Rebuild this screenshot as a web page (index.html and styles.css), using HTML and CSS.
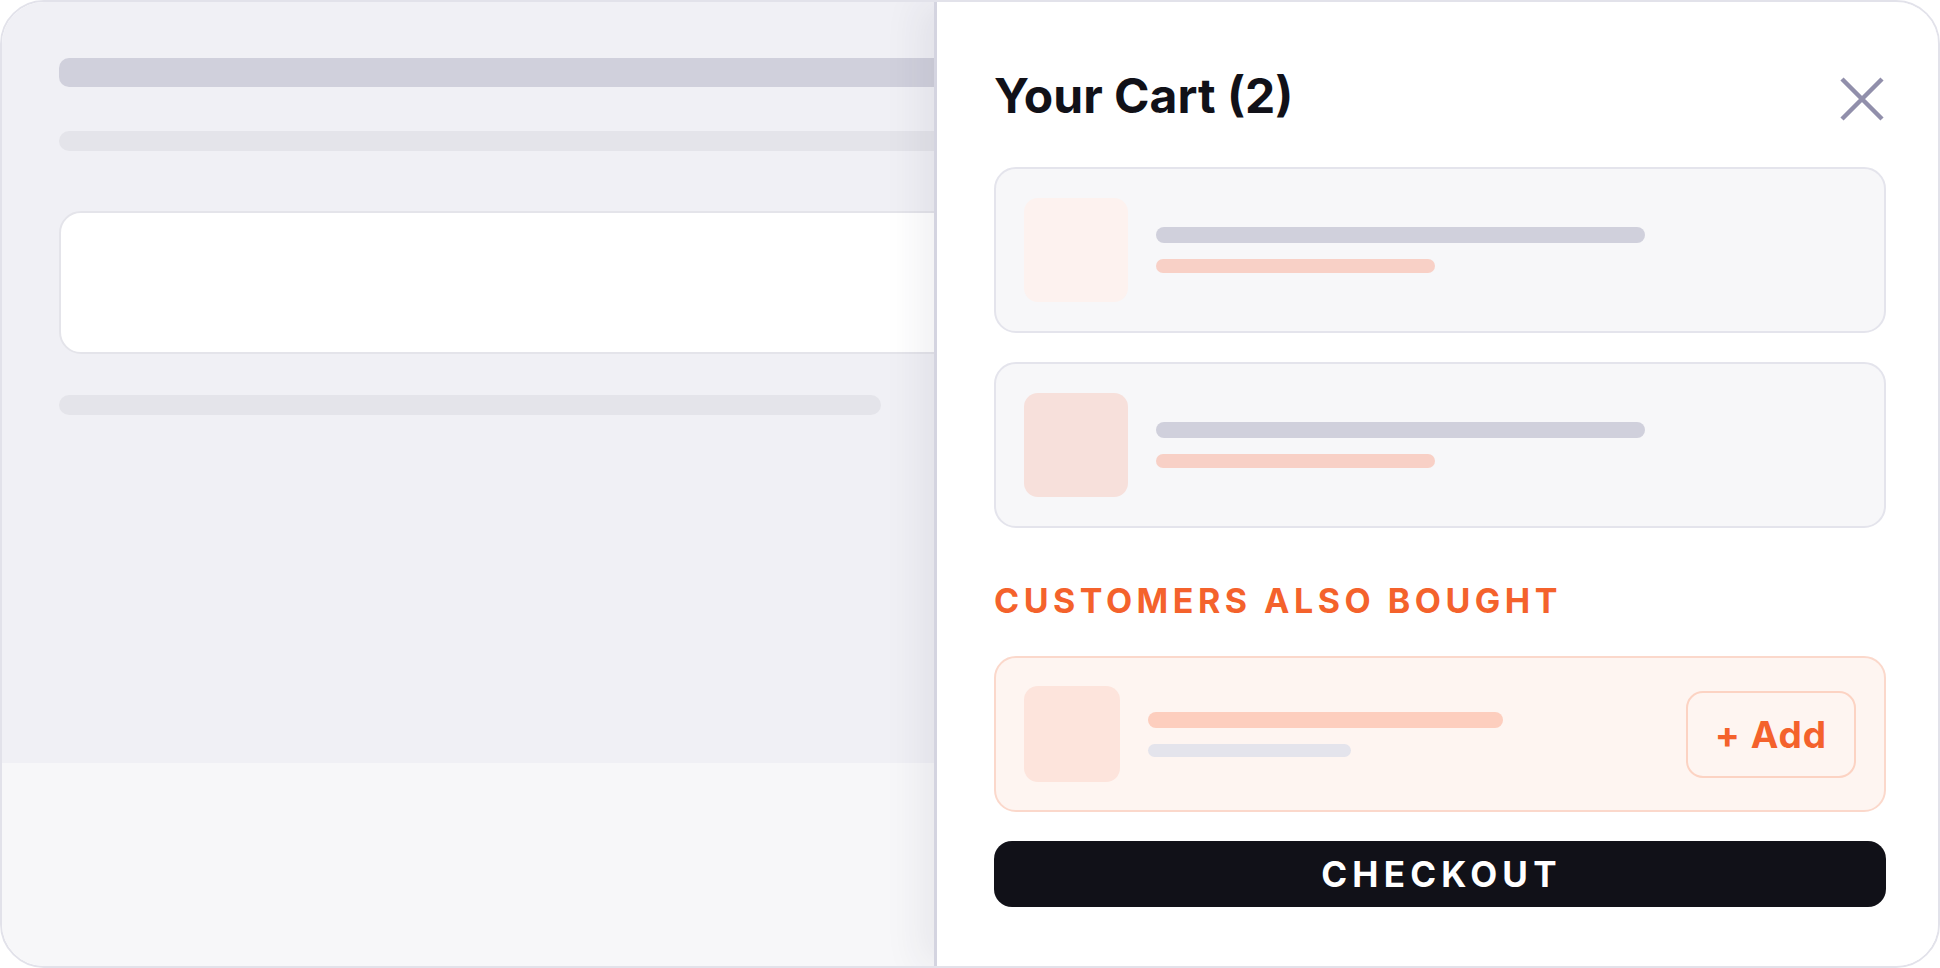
FILE: index.html
```html
<!DOCTYPE html>
<html lang="en">
<head>
  <meta charset="UTF-8">
  <meta name="viewport" content="width=device-width, initial-scale=1">
  <title>Your Cart</title>
  <link rel="stylesheet" href="styles.css">
</head>
<body>
  <div class="frame">
    <!-- page behind the drawer, still loading -->
    <div class="page">
      <main class="page-main">
        <div class="skel skel-heading"></div>
        <div class="skel skel-sub"></div>
        <div class="page-card"></div>
        <div class="skel skel-text"></div>
      </main>
      <footer class="page-foot"></footer>
    </div>

    <aside class="drawer">
      <div class="drawer-head">
        <h1>Your Cart (2)</h1>
        <button class="close" aria-label="Close cart">
          <svg width="44" height="44" viewBox="0 0 44 44">
            <path d="M2 2 L42 42 M42 2 L2 42" stroke="#918fab" stroke-width="4.5" fill="none"/>
          </svg>
        </button>
      </div>

      <div class="cart-item">
        <div class="thumb thumb-faded"></div>
        <div class="lines">
          <div class="line line-name"></div>
          <div class="line line-price"></div>
        </div>
      </div>
      <div class="cart-item">
        <div class="thumb"></div>
        <div class="lines">
          <div class="line line-name"></div>
          <div class="line line-price"></div>
        </div>
      </div>

      <h2 class="upsell-title">Customers also bought</h2>
      <div class="upsell-item">
        <div class="thumb upsell-thumb"></div>
        <div class="lines">
          <div class="line upsell-name"></div>
          <div class="line upsell-price"></div>
        </div>
        <button class="add">+ Add</button>
      </div>

      <button class="checkout">Checkout</button>
    </aside>
  </div>
</body>
</html>
```

FILE: styles.css
```css
* {
  box-sizing: border-box;
}

html, body {
  margin: 0;
  height: 100%;
  background: #fff;
  font-family: Inter, 'Noto Sans', sans-serif;
}

.frame {
  position: relative;
  height: 100vh;
  border: 2px solid #e2e2ea;
  border-radius: 44px;
  overflow: hidden;
}

/* background page */
.page {
  display: flex;
  flex-direction: column;
  height: 100%;
}

.page-main {
  height: 761px;
  background: #f0f0f5;
  padding: 56px 0 0 57px;
}

.page-foot {
  flex: 1;
  background: #f7f7f9;
}

.skel {
  border-radius: 10px;
}

.skel-heading {
  height: 29px;
  width: 1200px;
  background: #d0d0dc;
  margin-bottom: 44px;
}

.skel-sub {
  height: 20px;
  width: 1200px;
  background: #e4e4ea;
  margin-bottom: 60px;
}

.page-card {
  height: 143px;
  width: 1200px;
  background: #fff;
  border: 2px solid #e4e4ea;
  border-radius: 22px;
  margin-bottom: 41px;
}

.skel-text {
  height: 20px;
  width: 822px;
  background: #e4e4ea;
}

/* cart drawer */
.drawer {
  position: absolute;
  top: 0;
  right: 0;
  bottom: 0;
  width: 1004px;
  background: #fff;
  border-left: 3px solid #d4d4e0;
  box-shadow: -14px 0 36px rgba(40, 40, 70, 0.07);
  padding: 65px 52px 0 57px;
}

.drawer-head {
  display: flex;
  justify-content: space-between;
  align-items: center;
  height: 58px;
  margin-bottom: 42px;
}

.drawer-head h1 {
  margin: 0;
  font-size: 48px;
  line-height: 58px;
  font-weight: 700;
  color: #111118;
}

.close {
  border: 0;
  background: none;
  padding: 0;
  margin: 6px 2px 0 0;
  width: 44px;
  height: 44px;
  cursor: pointer;
}

.close svg {
  display: block;
}

.cart-item {
  display: flex;
  align-items: center;
  gap: 28px;
  padding: 29px 28px;
  background: #f7f7f9;
  border: 2px solid #e4e4ec;
  border-radius: 22px;
  margin-bottom: 29px;
}

.thumb {
  flex: none;
  width: 104px;
  height: 104px;
  border-radius: 14px;
  background: #f7e0db;
}

.thumb-faded {
  background: #fdf2ef;
}

.lines {
  flex: 1;
  display: flex;
  flex-direction: column;
  gap: 16px;
}

.line {
  border-radius: 8px;
}

.line-name {
  width: 489px;
  height: 16px;
  background: #d0d0dc;
}

.line-price {
  width: 279px;
  height: 14px;
  background: #f8d0c6;
}

.upsell-title {
  margin: 52px 0 35px;
  font-size: 34px;
  line-height: 41px;
  font-weight: 700;
  letter-spacing: 4.5px;
  text-transform: uppercase;
  color: #f4622c;
}

.upsell-item {
  display: flex;
  align-items: center;
  gap: 28px;
  padding: 28px;
  background: #fef5f1;
  border: 2px solid #fbd8cb;
  border-radius: 22px;
}

.upsell-thumb {
  width: 96px;
  height: 96px;
  background: #fde4dc;
}

.upsell-name {
  width: 355px;
  height: 16px;
  background: #fdcebe;
}

.upsell-price {
  width: 203px;
  height: 13px;
  background: #e4e4ec;
}

.add {
  flex: none;
  width: 170px;
  height: 87px;
  border: 2px solid #fcd3c3;
  border-radius: 17px;
  background: #fef5f1;
  color: #f4622c;
  font-family: inherit;
  font-size: 37px;
  font-weight: 700;
  letter-spacing: 1px;
  cursor: pointer;
}

.checkout {
  display: block;
  width: 100%;
  height: 66px;
  margin-top: 29px;
  border: 0;
  border-radius: 18px;
  background: #111118;
  color: #fff;
  font-family: inherit;
  font-size: 35px;
  font-weight: 700;
  letter-spacing: 5.2px;
  text-indent: 3px;
  text-transform: uppercase;
  cursor: pointer;
}
```
